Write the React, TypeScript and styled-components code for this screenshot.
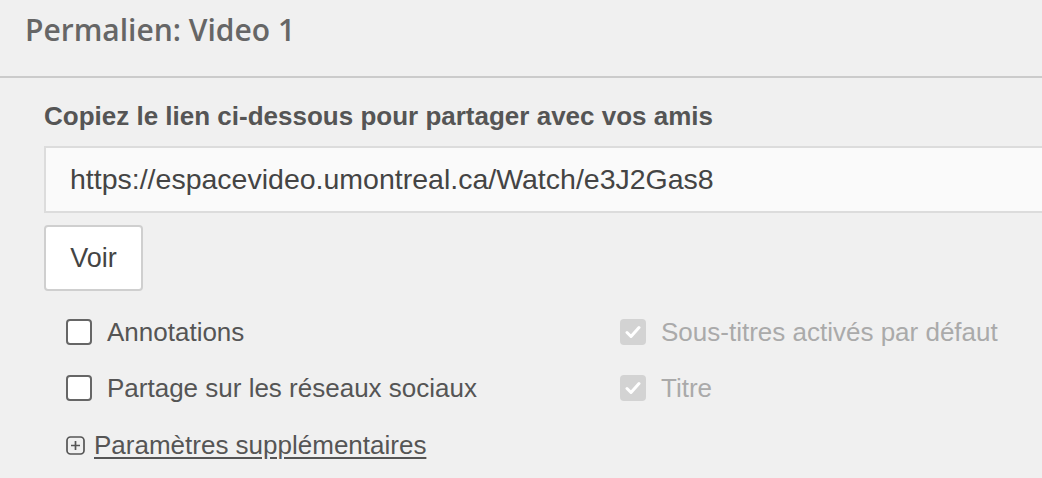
import React from 'react'
import styled, { createGlobalStyle } from 'styled-components'

const GlobalStyle = createGlobalStyle`
  html, body {
    margin: 0;
    padding: 0;
    background: #f0f0f0;
    overflow: hidden;
  }
  body {
    font-family: 'Liberation Sans', Arial, sans-serif;
    color: #555;
  }
`

type Option = { label: string; checked: boolean; disabled?: boolean }

const leftOptions: Option[] = [
  { label: 'Annotations', checked: false },
  { label: 'Partage sur les réseaux sociaux', checked: false },
]

const rightOptions: Option[] = [
  { label: 'Sous-titres activés par défaut', checked: true, disabled: true },
  { label: 'Titre', checked: true, disabled: true },
]

function CheckItem({ option }: { option: Option }) {
  return (
    <CheckLabel $disabled={option.disabled}>
      <Box $checked={option.checked} $disabled={option.disabled}>
        {option.checked && (
          <svg width="16" height="14" viewBox="0 0 16 14">
            <path
              d="M2 7.5 L6 11.5 L14 2.5"
              fill="none"
              stroke="#fff"
              strokeWidth="3"
              strokeLinecap="round"
              strokeLinejoin="round"
            />
          </svg>
        )}
      </Box>
      {option.label}
    </CheckLabel>
  )
}

export default function App() {
  return (
    <>
      <GlobalStyle />
      <Panel>
        <Header>
          <Title>Permalien: Video 1</Title>
        </Header>
        <Body>
          <FieldLabel>Copiez le lien ci-dessous pour partager avec vos amis</FieldLabel>
          <LinkInput readOnly value="https://espacevideo.umontreal.ca/Watch/e3J2Gas8" />
          <ViewButton>Voir</ViewButton>
          <Options>
            <Column>
              {leftOptions.map(o => (
                <Row key={o.label}>
                  <CheckItem option={o} />
                </Row>
              ))}
              <Row>
                <MoreLink>
                  <PlusIcon width="19" height="19" viewBox="0 0 19 19">
                    <rect x="1" y="1" width="17" height="17" rx="3.5" fill="none" stroke="#555" strokeWidth="1.7" />
                    <path d="M9.5 5 V14 M5 9.5 H14" stroke="#555" strokeWidth="1.7" />
                  </PlusIcon>
                  <MoreText>Paramètres supplémentaires</MoreText>
                </MoreLink>
              </Row>
            </Column>
            <Column>
              {rightOptions.map(o => (
                <Row key={o.label}>
                  <CheckItem option={o} />
                </Row>
              ))}
            </Column>
          </Options>
        </Body>
      </Panel>
    </>
  )
}

const Panel = styled.div`
  width: 1042px;
  height: 478px;
`

const Header = styled.div`
  height: 78px;
  box-sizing: border-box;
  padding: 10px 0 0 25px;
  border-bottom: 2px solid #cbcbcb;
`

const Title = styled.h2`
  margin: 0;
  font-family: 'Open Sans', sans-serif;
  font-weight: 600;
  font-size: 30px;
  line-height: 40px;
  color: #666;
`

const Body = styled.div`
  padding: 23px 0 0 44px;
`

const FieldLabel = styled.div`
  font-weight: 700;
  font-size: 26px;
  line-height: 30px;
  color: #555;
`

const LinkInput = styled.input`
  display: block;
  box-sizing: border-box;
  width: 1040px;
  height: 67px;
  margin-top: 15px;
  padding: 0 0 0 24px;
  border: 2px solid #dcdcdc;
  background: #fafafa;
  font-family: 'Liberation Sans', Arial, sans-serif;
  font-size: 28.5px;
  color: #444;
  outline: none;
`

const ViewButton = styled.button`
  display: block;
  box-sizing: border-box;
  width: 99px;
  height: 66px;
  margin-top: 12px;
  border: 2px solid #cfcfcf;
  border-radius: 4px;
  background: #fff;
  font-family: 'Liberation Sans', Arial, sans-serif;
  font-size: 27px;
  color: #444;
  padding: 0;
`

const Options = styled.div`
  display: grid;
  grid-template-columns: 554px auto;
  margin-top: 13px;
  padding-left: 22px;
`

const Column = styled.div`
  display: flex;
  flex-direction: column;
`

const Row = styled.div`
  height: 56px;
  display: flex;
  align-items: center;
`

const CheckLabel = styled.label<{ $disabled?: boolean }>`
  display: flex;
  align-items: center;
  gap: 15px;
  font-size: 26px;
  color: ${p => (p.$disabled ? '#aaa' : '#555')};
`

const Box = styled.span<{ $checked: boolean; $disabled?: boolean }>`
  width: 26px;
  height: 26px;
  box-sizing: border-box;
  border-radius: 4px;
  display: flex;
  align-items: center;
  justify-content: center;
  border: ${p => (p.$checked ? 'none' : '2px solid #666')};
  background: ${p => (p.$checked ? (p.$disabled ? '#d3d3d3' : '#666') : '#fff')};
`

const MoreLink = styled.a`
  display: flex;
  align-items: center;
  gap: 9px;
  margin-top: 2px;
  cursor: pointer;
`

const PlusIcon = styled.svg`
  flex: none;
`

const MoreText = styled.span`
  font-size: 26px;
  color: #555;
  text-decoration: underline;
  text-underline-offset: 3px;
`
